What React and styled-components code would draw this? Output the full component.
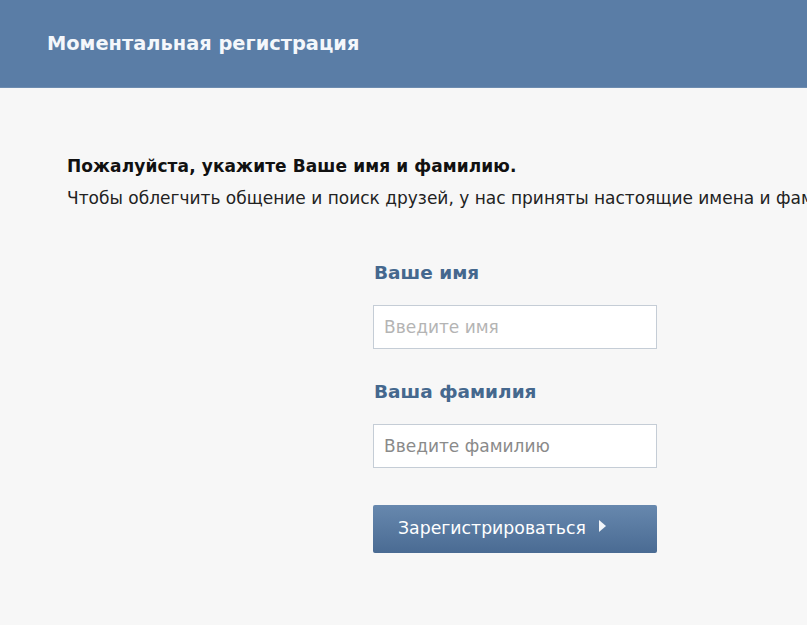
import React from 'react';
import styled, { createGlobalStyle } from 'styled-components';

const GlobalStyle = createGlobalStyle`
  html, body {
    margin: 0;
    padding: 0;
    background: #f7f7f7;
  }
  body {
    font-family: "DejaVu Sans", Tahoma, sans-serif;
    overflow: hidden;
  }
`;

const Page = styled.div`
  width: 807px;
  height: 625px;
  background: #f7f7f7;
  overflow: hidden;
`;

const Header = styled.header`
  height: 88px;
  background: #5a7da6;
  border-bottom: 1px solid #6d8cb0;
  box-sizing: border-box;
  display: flex;
  align-items: center;
  padding-left: 47px;
  padding-bottom: 1px;
`;

const Title = styled.h1`
  margin: 0;
  font-size: 19.4px;
  font-weight: bold;
  color: #f4f7fb;
`;

const Content = styled.div`
  padding: 68px 0 0 67px;
  white-space: nowrap;
`;

const Lead = styled.p`
  margin: 0;
  font-size: 17px;
  line-height: 20px;
  font-weight: bold;
  color: #111;
  letter-spacing: 0.1px;
`;

const Note = styled.p`
  margin: 12px 0 0;
  font-size: 17px;
  line-height: 20px;
  color: #222;
`;

const Form = styled.form`
  margin: 54px 0 0 306px;
  width: 284px;
  display: flex;
  flex-direction: column;
`;

const Label = styled.label`
  display: block;
  font-size: 18.5px;
  line-height: 22px;
  font-weight: bold;
  color: #45688e;
  margin: ${({ first }) => (first ? '0' : '32px')} 0 21px 1px;
`;

const Input = styled.input`
  box-sizing: border-box;
  width: 284px;
  height: 44px;
  border: 1px solid #c5cdd6;
  background: #fff;
  padding: 0 10px;
  font-family: "DejaVu Sans", Tahoma, sans-serif;
  font-size: 17px;
  color: #333;
  outline: none;
  &::placeholder {
    color: ${({ dark }) => (dark ? '#8a8a8a' : '#b4b4b4')};
  }
`;

const Button = styled.button`
  margin-top: 37px;
  width: 284px;
  height: 48px;
  border: none;
  border-radius: 2px;
  background: linear-gradient(#6788ae, #4a6b93);
  color: #fff;
  font-family: "DejaVu Sans", Tahoma, sans-serif;
  font-size: 17.3px;
  display: flex;
  align-items: center;
  padding: 0 0 2px 25px;
  gap: 13px;
  cursor: pointer;
`;

const Arrow = styled.span`
  width: 0;
  height: 0;
  border-top: 6px solid transparent;
  border-bottom: 6px solid transparent;
  border-left: 7px solid #f2f5f9;
  margin-top: -4px;
`;

export default function App() {
  return (
    <Page>
      <GlobalStyle />
      <Header>
        <Title>Моментальная регистрация</Title>
      </Header>
      <Content>
        <Lead>Пожалуйста, укажите Ваше имя и фамилию.</Lead>
        <Note>Чтобы облегчить общение и поиск друзей, у нас приняты настоящие имена и фамилии.</Note>
        <Form onSubmit={(e) => e.preventDefault()}>
          <Label first htmlFor="first">Ваше имя</Label>
          <Input id="first" placeholder="Введите имя" />
          <Label htmlFor="last">Ваша фамилия</Label>
          <Input id="last" dark placeholder="Введите фамилию" />
          <Button type="submit">
            Зарегистрироваться
            <Arrow />
          </Button>
        </Form>
      </Content>
    </Page>
  );
}
